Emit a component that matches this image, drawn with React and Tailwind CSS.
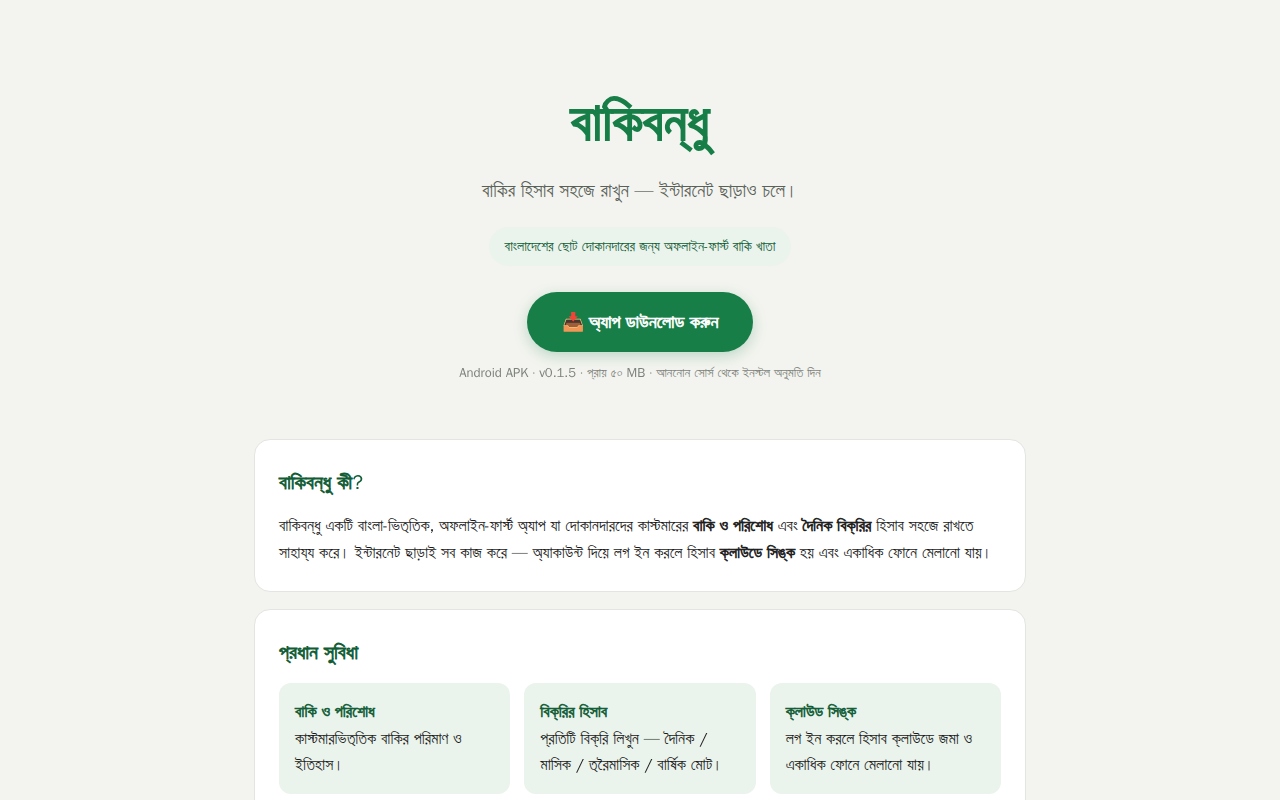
import React from "react";

const features = [
  {
    title: "বাকি ও পরিশোধ",
    text: <><Joined>কাস্টমার</Joined>ভিত্তিক বাকির পরিমাণ ও ইতিহাস।</>,
  },
  {
    title: "বিক্রির হিসাব",
    text: "প্রতিটি বিক্রি লিখুন — দৈনিক / মাসিক / ত্রৈমাসিক / বার্ষিক মোট।",
  },
  {
    title: "ক্লাউড সিঙ্ক",
    text: "লগ ইন করলে হিসাব ক্লাউডে জমা ও একাধিক ফোনে মেলানো যায়।",
  },
];

// words that keep their joined consonants
function Joined({ children }) {
  return <span className={`[font-feature-settings:"blwf"_0,"pstf"_0]`}>{children}</span>;
}

// FreeSans has no bold Bengali face, so thicken the regular one
const Bold = ({ children }) => (
  <strong className="font-normal [-webkit-text-stroke:0.04em_currentColor]">{children}</strong>
);

const Card = ({ title, children }) => (
  <section className="rounded-2xl border border-[#e2e5e0] bg-white p-6">
    <h2 className="mb-3 text-xl leading-[37px] text-[#0f5c35]">{title}</h2>
    {children}
  </section>
);

const App = () => {
  return (
    <div
      lang="bn"
      className={`min-h-screen bg-[#f3f4ef] font-['WenQuanYi_Zen_Hei','FreeSans','Noto_Sans',sans-serif] [font-feature-settings:"half"_0,"blwf"_0,"pstf"_0,"pres"_0] text-[#1a1a1a]`}
    >
      <header className="flex flex-col items-center px-6 pt-20 pb-[54px] text-center">
        <h1 className="text-[53px] leading-[86px] text-[#177e48]">
          <Bold>বাকিবন্ধু</Bold>
        </h1>
        <p className="mt-2 text-[19px] leading-[34px] text-[#5a6159]">
          বাকির হিসাব সহজে রাখুন — <Joined>ইন্টারনেট</Joined> ছাড়াও চলে।
        </p>
        <span className="mt-[19px] rounded-full bg-[#eaf3ec] px-4 py-2 text-sm leading-[23px] text-[#0f5c35]">
          বাংলাদেশের ছোট দোকানদারের জন্য অফলাইন-<Joined>ফার্স্ট</Joined> বাকি খাতা
        </span>
        <a
          href="#download"
          className="mt-[26px] rounded-full bg-[#177e48] px-[35px] py-4 text-lg leading-7 text-white shadow-[0_4px_14px_rgba(23,126,72,0.25)]"
        >
          📥 <Bold>অ্যাপ ডাউনলোড করুন</Bold>
        </a>
        <p className="mt-2 text-[13px] leading-[25px] text-[#7d837c]">
          Android APK · v0.1.5 · প্রায় ৫০ MB · আননোন সোর্স থেকে <Joined>ইনস্টল</Joined> অনুমতি দিন
        </p>
      </header>

      <main className="mx-auto flex max-w-[820px] flex-col gap-[17px] px-6 pb-12">
        <Card title={<><Bold>বাকিবন্ধু কী</Bold>?</>}>
          <p className="text-base leading-[27px]">
            বাকিবন্ধু একটি বাংলা-ভিত্তিক, অফলাইন-<Joined>ফার্স্ট</Joined> অ্যাপ যা দোকানদারদের{" "}
            <Joined>কাস্টমারের</Joined> <Bold>বাকি ও পরিশোধ</Bold> এবং <Bold>দৈনিক বিক্রির</Bold>{" "}
            হিসাব সহজে রাখতে সাহায্য করে। <Joined>ইন্টারনেট</Joined> ছাড়াই সব কাজ করে —{" "}
            <Joined>অ্যাকাউন্ট</Joined> দিয়ে লগ ইন করলে হিসাব <Bold>ক্লাউডে সিঙ্ক</Bold> হয় এবং
            একাধিক ফোনে মেলানো যায়।
          </p>
        </Card>

        <Card title={<Bold>প্রধান সুবিধা</Bold>}>
          <div className="grid grid-cols-1 gap-[14px] sm:grid-cols-3">
            {features.map((feature) => (
              <div key={feature.title} className="rounded-xl bg-[#eaf3ec] p-4">
                <h3 className="text-base leading-[27px] text-[#0f5c35]">
                  <Bold>{feature.title}</Bold>
                </h3>
                <p className="text-base leading-[26px]">{feature.text}</p>
              </div>
            ))}
          </div>
        </Card>
      </main>
    </div>
  );
};

export default App;
